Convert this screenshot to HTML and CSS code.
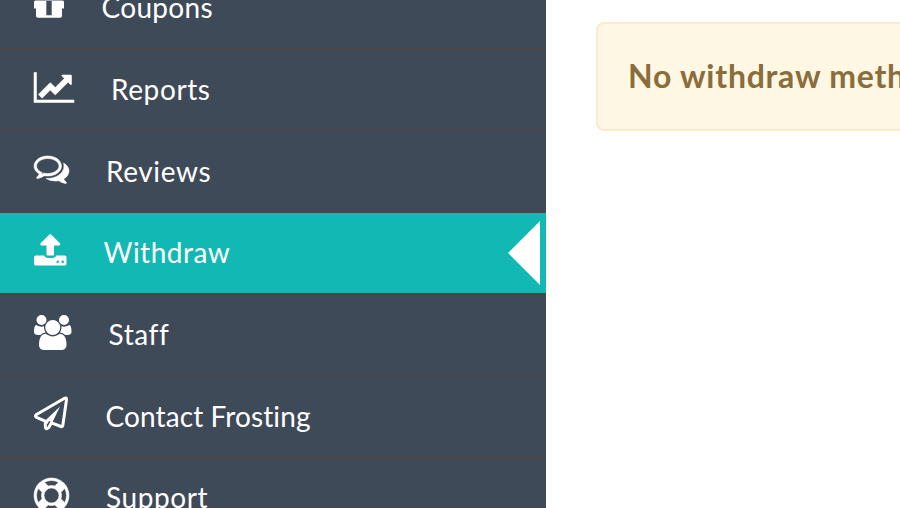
FILE: index.html
```html
<!DOCTYPE html>
<html lang="en">
<head>
<meta charset="utf-8">
<title>Withdraw</title>
<link rel="stylesheet" href="styles.css">
</head>
<body>
<div class="dashboard">
  <nav class="sidebar">
    <a class="item coupons"><svg class="icon" width="30" height="35" viewBox="0 0 30 35"><path fill-rule="evenodd" d="M1.500 12.500H28.500Q30 12.500 30 14V20.500H28V28Q28 29.800 26 29.800H4Q2 29.800 2 28V20.500H0V14Q0 12.500 1.500 12.500ZM12.300 13V27.300H17.700V13Z"/></svg><span class="label">Coupons</span></a>
    <a class="item reports"><svg class="icon" width="40" height="35" viewBox="0 0 2048 1792"><path class="bold" d="M2048 1536v128h-2048v-1536h128v1408h1920zm-128-1248v435q0 21-19.5 29.5t-35.5-7.5l-121-121-633 633q-10 10-23 10t-23-10l-233-233-416 416-192-192 585-585q10-10 23-10t23 10l233 233 464-464-121-121q-16-16-7.5-35.5t29.5-19.5h435q14 0 23 9t9 23z"/></svg><span class="label">Reports</span></a>
    <a class="item reviews"><svg class="icon" width="35" height="35" viewBox="0 0 1792 1792"><path class="bold" d="M704 384q-153 0-286 52t-211.5 141-78.5 191q0 82 53 158t149 132l97 56-35 84q34-20 62-39l44-31 53 10q78 14 153 14 153 0 286-52t211.5-141 78.5-191-78.5-191-211.5-141-286-52zm0-128q191 0 353.5 68.5t256.5 186.5 94 257-94 257-256.5 186.5-353.5 68.5q-86 0-176-16-124 88-278 128-36 9-86 16h-3q-11 0-20.5-8t-11.5-21q-1-3-1-6.500t.5-6.500 2-6l2.500-5 3.500-5.500 4-5 4.500-5 4-4.500q5-6 23-25t26-29.500 22.500-29 25-38.500 20.500-44q-124-72-195-177t-71-224q0-139 94-257t256.500-186.500 353.500-68.500zm822 1169q10 24 20.500 44t25 38.500 22.500 29 26 29.500 23 25q1 1 4 4.500t4.500 5 4 5 3.500 5.500l2.500 5 2 6 .5 6.500-1 6.500q-3 14-13 22t-22 7q-50-7-86-16-154-40-278-128-90 16-176 16-271 0-472-132 58 4 88 4 161 0 309-45t264-129q125-92 192-212t67-254q0-77-23-152 129 71 204 178t75 230q0 120-71 224.500t-195 176.500z"/></svg><span class="label">Reviews</span></a>
    <a class="item withdraw active"><svg class="icon" width="32.5" height="35" viewBox="64 0 1664 1792"><path d="M1344 1472q0-26-19-45t-45-19-45 19-19 45 19 45 45 19 45-19 19-45zm256 0q0-26-19-45t-45-19-45 19-19 45 19 45 45 19 45-19 19-45zm128-224v320q0 40-28 68t-68 28h-1472q-40 0-68-28t-28-68v-320q0-40 28-68t68-28h427q21 56 70.500 92t110.500 36h256q61 0 110.500-36t70.500-92h427q40 0 68 28t28 68zm-325-648q-17 40-59 40h-256v448q0 26-19 45t-45 19h-256q-26 0-45-19t-19-45v-448h-256q-42 0-59-40-17-39 14-69l448-448q18-19 45-19t45 19l448 448q31 30 14 69z"/></svg><span class="label">Withdraw</span></a>
    <a class="item staff"><svg class="icon" width="37.5" height="35" viewBox="0 0 1920 1792"><path d="M593 896q-162 5-265 128h-134q-82 0-138-40.500t-56-118.500q0-353 124-353 6 0 43.500 21t97.500 42.500 119 21.500q67 0 133-23-5 37-5 66 0 139 81 256zm1071 637q0 120-73 189.500t-194 69.500h-874q-121 0-194-69.500t-73-189.500q0-53 3.500-103.500t14-109 26.500-108.500 43-97.500 62-81 85.500-53.500 111.500-20q10 0 43 21.500t73 48 107 48 135 21.500 135-21.500 107-48 73-48 43-21.500q61 0 111.500 20t85.500 53.500 62 81 43 97.500 26.500 108.500 14 109 3.500 103.500zm-1024-1277q0 106-75 181t-181 75-181-75-75-181 75-181 181-75 181 75 75 181zm704 384q0 159-112.500 271.500t-271.500 112.500-271.500-112.500-112.500-271.500 112.500-271.500 271.500-112.500 271.500 112.500 112.500 271.500zm576 225q0 78-56 118.500t-138 40.500h-134q-103-123-265-128 81-117 81-256 0-29-5-66 66 23 133 23 59 0 119-21.500t97.500-42.500 43.500-21q124 0 124 353zm-128-609q0 106-75 181t-181 75-181-75-75-181 75-181 181-75 181 75 75 181z"/></svg><span class="label">Staff</span></a>
    <a class="item contact"><svg class="icon" width="35" height="35" viewBox="0 0 35 35"><path class="line" d="M30.500 2.300Q32.800 1.200 32.500 3.700L28.800 29.500Q28.500 31 27 30.500L17.500 26.800L14.800 31.500Q11.500 34.500 11.300 30.500V25.200L2.500 21.300Q.4 20.200 2.500 18.500Z"/><path d="M26 10.500L18.300 26.500L15 25L13.500 28L10.300 25.500Z"/></svg><span class="label">Contact Frosting</span></a>
    <a class="item support"><svg class="icon" width="35" height="35" viewBox="0 0 1792 1792"><path class="bold" d="M896 0q182 0 348 71t286 191 191 286 71 348-71 348-191 286-286 191-348 71-348-71-286-191-191-286-71-348 71-348 191-286 286-191 348-71zm0 128q-190 0-361 90l194 194q82-28 167-28t167 28l194-194q-171-90-361-90zm-678 1129l194-194q-28-82-28-167t28-167l-194-194q-90 171-90 361t90 361zm678 407q190 0 361-90l-194-194q-82 28-167 28t-167-28l-194 194q171 90 361 90zm0-384q159 0 271.500-112.500t112.500-271.500-112.500-271.500-271.500-112.500-271.500 112.500-112.500 271.500 112.500 271.500 271.500 112.500zm484-217l194 194q90-171 90-361t-90-361l-194 194q28 82 28 167t-28 167z"/></svg><span class="label">Support</span></a>
  </nav>
  <main class="content">
    <div class="alert"><strong class="message">No withdraw method is available.</strong></div>
  </main>
</div>
</body>
</html>
```
FILE: styles.css
```css
* { box-sizing: border-box; }
body {
  margin: 0;
  height: 508px;
  overflow: hidden;
  background: #fff;
  font-family: Lato, "Open Sans", sans-serif;
  font-variant-ligatures: none;
}
.dashboard { display: flex; height: 508px; overflow: hidden; }
.sidebar {
  flex: none;
  width: 546px;
  margin-top: -31.9px;
  background: #3f4a59;
}
.item {
  position: relative;
  display: flex;
  align-items: flex-start;
  height: 81.65px;
  padding: 19.9px 0 0 34px;
  border-bottom: 2px solid #4a4648;
  color: #fff;
}
.item.active { background: #12b9b4; }
.item.active::after {
  content: "";
  position: absolute;
  top: 8px;
  right: 6px;
  width: 32px;
  height: 64px;
  background: #fff;
  clip-path: polygon(100% 0, 100% 100%, 0 50%);
}
.icon { display: block; flex: none; overflow: visible; fill: #fff; }
.icon .bold { stroke: #fff; stroke-width: 28; }
.icon .line { fill: none; stroke: #fff; stroke-width: 3; stroke-linejoin: round; }
.label {
  margin-top: 2.4px;
  margin-left: 37px;
  font-size: 28px;
  line-height: 35px;
  letter-spacing: .6px;
  white-space: nowrap;
}
.coupons .label { letter-spacing: .3px; margin-left: 37.500px; }
.withdraw .label { letter-spacing: .5px; }
.contact .label { letter-spacing: .1px; margin-left: 36.500px; }
.content { flex: none; width: 700px; padding: 22px 0 0 50px; }
.alert {
  height: 109px;
  padding: 30px 30px;
  border: 2px solid #faebcc;
  border-radius: 8px;
  background: #fdf7e3;
  color: #8a6d3b;
}
.message {
  display: block;
  font-size: 32px;
  line-height: 43px;
  font-weight: 700;
  letter-spacing: .75px;
  white-space: nowrap;
}
```
